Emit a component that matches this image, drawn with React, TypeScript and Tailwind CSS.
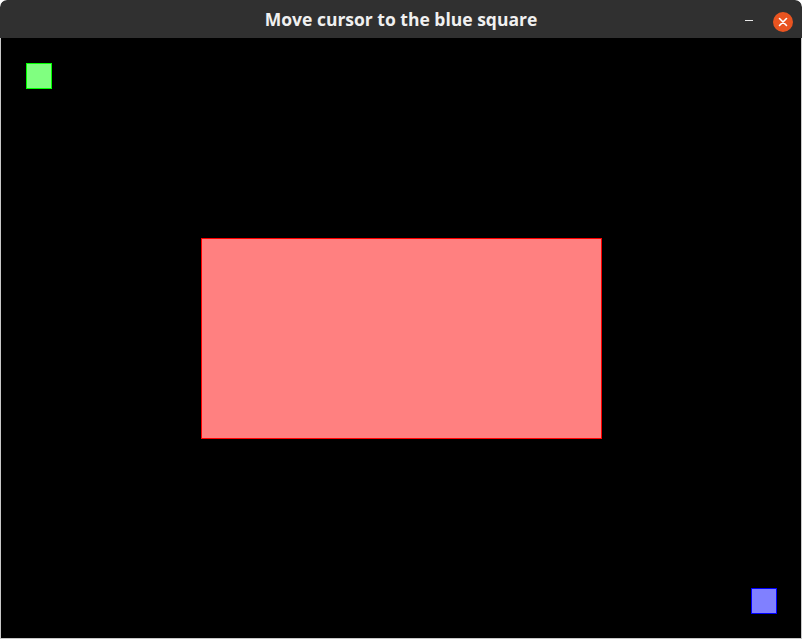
export default function App() {
  return (
    <div className="w-[802px] h-[639px] bg-[#c8c8c8] flex flex-col overflow-hidden rounded-t-[7px]">
      {/* Title bar */}
      <div className="h-[38px] shrink-0 bg-[#303030] rounded-t-[7px] relative flex items-center justify-center">
        <span
          className="text-[17.5px] font-bold text-[#f0f0f0] leading-none pt-[1px]"
          style={{ fontFamily: '"Open Sans", "DejaVu Sans", sans-serif' }}
        >
          Move cursor to the blue square
        </span>
        <div className="absolute left-[745px] top-[20px] w-[8px] h-[1px] bg-[#e8e8e8]" />
        <div className="absolute left-[773px] top-[12px] w-[20px] h-[20px] rounded-full bg-[#e95420] flex items-center justify-center">
          <svg width="10" height="10" viewBox="0 0 10 10">
            <path d="M1.5 1.5L8.5 8.5M8.5 1.5L1.5 8.5" stroke="#ffffff" strokeWidth="1.6" strokeLinecap="round" />
          </svg>
        </div>
      </div>
      {/* Canvas */}
      <div className="mx-[1px] w-[800px] h-[600px] bg-black relative">
        <div className="absolute left-[25px] top-[25px] w-[26px] h-[26px] bg-[#80ff80] border border-[#00ff00]" />
        <div className="absolute left-[200px] top-[200px] w-[401px] h-[201px] bg-[#ff8080] border border-[#ff0000]" />
        <div className="absolute left-[750px] top-[550px] w-[26px] h-[26px] bg-[#8080ff] border border-[#0000ff]" />
      </div>
    </div>
  );
}
